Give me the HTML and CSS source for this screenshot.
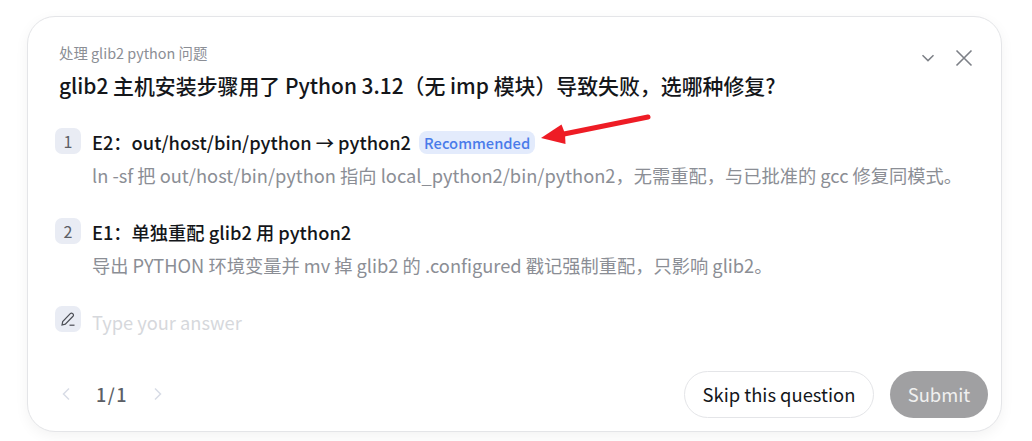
FILE: index.html
```html
<!DOCTYPE html>
<html lang="zh-CN">
<head>
  <meta charset="UTF-8" />
  <title>处理 glib2 python 问题</title>
  <link rel="stylesheet" href="styles.css">
</head>
<body>
  <div class="card">
    <div class="card-head">
      <div class="head-text">
        <div class="eyebrow">处理 glib2 python 问题</div>
        <h1 class="question">glib2 主机安装步骤用了 Python 3.12（无 imp 模块）导致失败，选哪种修复?</h1>
      </div>
      <div class="head-actions">
        <svg class="icon-chevron" width="14" height="8" viewBox="0 0 14 8"><path d="M1.5 1.2 7 6.6l5.5-5.4"/></svg>
        <svg class="icon-close" width="18" height="18" viewBox="0 0 18 18"><path d="M1.5 1.5l15 15M16.5 1.5l-15 15"/></svg>
      </div>
    </div>

    <div class="options">
      <div class="option">
        <span class="num">1</span>
        <div class="option-body">
          <div class="option-title">E2：out/host/bin/python → python2 <span class="badge">Recommended</span></div>
          <div class="option-desc">ln -sf 把 out/host/bin/python 指向 local_python2/bin/python2，无需重配，与已批准的 gcc 修复同模式。</div>
        </div>
      </div>
      <div class="option">
        <span class="num">2</span>
        <div class="option-body">
          <div class="option-title">E1：单独重配 glib2 用 python2</div>
          <div class="option-desc">导出 PYTHON 环境变量并 mv 掉 glib2 的 .configured 戳记强制重配，只影响 glib2。</div>
        </div>
      </div>
      <div class="option answer">
        <span class="num">
          <svg width="16" height="16" viewBox="0 0 16 16"><path d="M2 14l.7-3.4 7.6-8a1.6 1.6 0 0 1 2.3 0l.4.4a1.6 1.6 0 0 1 0 2.3l-7.7 7.9z"/><path d="M9.5 14.2h5"/></svg>
        </span>
        <div class="placeholder">Type your answer</div>
      </div>
    </div>

    <div class="card-foot">
      <div class="pager">
        <svg width="10" height="14" viewBox="0 0 10 14"><path d="M8 1.5 2.500 7 8 12.5"/></svg>
        <span class="page-count">1/1</span>
        <svg width="10" height="14" viewBox="0 0 10 14"><path d="M2 1.5 7.500 7 2 12.5"/></svg>
      </div>
      <div class="foot-actions">
        <button class="btn-skip">Skip this question</button>
        <button class="btn-submit">Submit</button>
      </div>
    </div>
  </div>

  <svg class="arrow" width="120" height="36" viewBox="0 0 120 36">
    <path class="arrow-line" d="M108 3 24 20"/>
    <path class="arrow-head" d="M1 24 21.500 10.500 25 19.500 25.500 30z"/>
  </svg>
</body>
</html>
```

FILE: styles.css
```css
* {
  box-sizing: border-box;
}
body {
  margin: 0;
  padding: 16px 30px 9px 27px;
  background: #fff;
  font-family: "Noto Sans CJK SC", "Noto Sans", sans-serif;
  color: #14161a;
}
.card {
  height: 416px;
  padding: 26px 13px 13px 27px;
  background: #fff;
  border: 1px solid #e4e5e8;
  border-radius: 28px;
  box-shadow: 0 4px 14px rgba(0,0,0,0.05);
  display: flex;
  flex-direction: column;
}
.card-head {
  display: flex;
  justify-content: space-between;
  padding-left: 4px;
}
.eyebrow {
  font-size: 14.4px;
  line-height: 20px;
  color: #8b8e95;
}
.question {
  margin: 7px 0 0;
  font-size: 20.9px;
  line-height: 30px;
  font-weight: 500;
}
.head-actions {
  display: flex;
  align-items: center;
  gap: 20px;
  height: 28px;
  padding: 2px 15px 0 0;
}
.icon-chevron path {
  fill: none;
  stroke: #7d8087;
  stroke-width: 1.5;
}
.icon-close path {
  fill: none;
  stroke: #7d8087;
  stroke-width: 1.6;
}
.options {
  margin-top: 28px;
  display: flex;
  flex-direction: column;
  gap: 29px;
}
.option {
  display: flex;
  gap: 11px;
}
.num {
  flex: none;
  width: 26px;
  height: 26px;
  border-radius: 7px;
  background: #e9ecf4;
  color: #5c5f66;
  font-size: 16px;
  display: flex;
  align-items: center;
  justify-content: center;
}
.num svg {
  fill: none;
  stroke: #4b4e55;
  stroke-width: 1.2;
}
.option-title {
  font-size: 18.25px;
  line-height: 28px;
  font-weight: 500;
}
.option-desc {
  margin-top: 5px;
  font-size: 18.25px;
  line-height: 28px;
  color: #8b8e95;
}
.badge {
  display: inline-block;
  margin-left: 4px;
  padding: 0 5px;
  height: 23px;
  line-height: 23px;
  border-radius: 8px;
  background: #e3ebfc;
  color: #4a7bea;
  font-size: 14.7px;
  font-weight: 500;
  vertical-align: 1px;
}
.answer {
  margin-top: -2px;
}
.placeholder {
  font-size: 18.25px;
  line-height: 32px;
  color: #d6d8dc;
}
.card-foot {
  margin-top: auto;
  padding-left: 4px;
  display: flex;
  justify-content: space-between;
  align-items: center;
}
.pager {
  display: flex;
  align-items: center;
  gap: 25px;
  padding: 0 0 2px 2px;
}
.pager svg {
  fill: none;
  stroke: #d8dce6;
  stroke-width: 1.5;
}
.page-count {
  font-size: 18px;
  font-weight: 500;
  letter-spacing: 1.5px;
  color: #5c5f66;
}
.foot-actions {
  display: flex;
  gap: 16px;
}
button {
  height: 47px;
  padding: 0 0 2px;
  border-radius: 24px;
  font-family: inherit;
  font-size: 18.4px;
}
.btn-skip {
  width: 190px;
  background: #fff;
  border: 1px solid #e4e5e8;
  color: #14161a;
}
.btn-submit {
  width: 98px;
  background: #a0a0a2;
  border: none;
  color: #f0f0f0;
}
.arrow {
  position: absolute;
  left: 540px;
  top: 114px;
}
.arrow-line {
  fill: none;
  stroke: #ee1c25;
  stroke-width: 5;
  stroke-linecap: round;
}
.arrow-head {
  fill: #ee1c25;
}
```
